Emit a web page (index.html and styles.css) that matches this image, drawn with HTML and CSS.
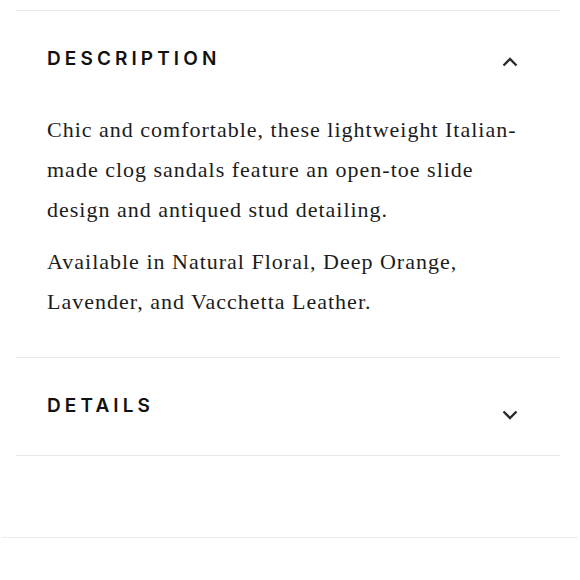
FILE: index.html
```html
<!DOCTYPE html>
<html lang="en">
<head>
<meta charset="utf-8">
<title>Product details</title>
<link rel="stylesheet" href="styles.css">
</head>
<body>
<div class="accordion">
  <section class="item">
    <div class="item-head">
      <h2 class="item-title">DESCRIPTION</h2>
      <svg class="chevron chevron-up" width="16" height="10" viewBox="0 0 16 10" aria-hidden="true">
        <path d="M1.5 8.5 L8 2 L14.5 8.5" fill="none" stroke="#2b2b2b" stroke-width="2.4"/>
      </svg>
    </div>
    <div class="item-body">
      <p>Chic and comfortable, these lightweight Italian-made clog sandals feature an open-toe slide design and antiqued stud detailing.</p>
      <p>Available in Natural Floral, Deep Orange, Lavender, and Vacchetta Leather.</p>
    </div>
  </section>
  <section class="item">
    <div class="item-head">
      <h2 class="item-title">DETAILS</h2>
      <svg class="chevron chevron-down" width="16" height="10" viewBox="0 0 16 10" aria-hidden="true">
        <path d="M1.5 1.5 L8 8 L14.5 1.5" fill="none" stroke="#2b2b2b" stroke-width="2.4"/>
      </svg>
    </div>
  </section>
</div>
<div class="footer-rule"></div>
</body>
</html>
```
FILE: styles.css
```css
html, body {
  margin: 0;
  padding: 0;
  background: #ffffff;
}

.accordion {
  margin: 10px 20px 0 16px;
}

.item {
  border-top: 1px solid #e9e9e9;
}

.item:last-child {
  border-bottom: 1px solid #e9e9e9;
}

.item-head {
  display: flex;
  align-items: flex-start;
  justify-content: space-between;
  padding: 36px 42px 0 31px;
}

.item:last-child .item-head {
  padding-bottom: 35px;
}

.item-title {
  margin: 0;
  font-family: "Inter", "Open Sans", sans-serif;
  font-weight: 600;
  font-size: 19px;
  line-height: 24px;
  letter-spacing: 4.1px;
  color: #111111;
}

.chevron {
  display: block;
  flex: none;
}

.chevron-up {
  margin-top: 10px;
}

.chevron-down {
  margin-top: 16px;
}

.item-body {
  padding: 39px 35px 35px 31px;
  font-family: "Liberation Serif", "Times New Roman", serif;
  font-size: 22px;
  line-height: 40px;
  letter-spacing: 1px;
  color: #1c1c1c;
}

.item-body p {
  margin: 0;
}

.item-body p + p {
  margin-top: 12px;
}

.footer-rule {
  margin: 81px 2px 0 2px;
  border-top: 1px solid #ececec;
}
```
